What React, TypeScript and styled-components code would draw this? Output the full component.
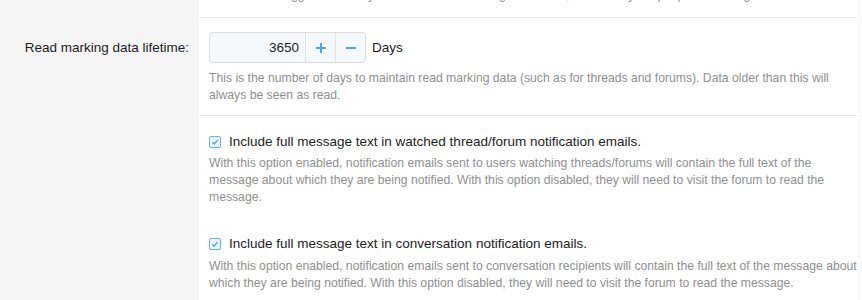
import React from 'react';
import styled, {createGlobalStyle} from "styled-components";

const GlobalStyle = createGlobalStyle`
  html, body {
    margin: 0;
    padding: 0;
    background: #fafafa;
    font-family: "Liberation Sans", Arial, sans-serif;
    overflow: hidden;
  }
`;

const Page = styled.div`
  height: 300px;
  overflow: hidden;
`;

const Form = styled.div`
  width: 857px;
  height: 313px;
  margin-top: -13px;
  background: #ffffff;
  display: flex;
  flex-direction: column;
`;

const Row = styled.div<{ $grow?: boolean }>`
  display: grid;
  grid-template-columns: 199px 1fr;
  flex: ${p => (p.$grow ? '1' : 'none')};
`;

const Label = styled.div<{ $pad?: string }>`
  background: #f5f5f5;
  text-align: right;
  padding: ${p => p.$pad || '0'};
  padding-right: 10px;
  font-size: 13.5px;
  line-height: 31px;
  color: #1d1d1d;
`;

const Controls = styled.div<{ $divider?: boolean; $pad: string }>`
  padding: ${p => p.$pad};
  padding-left: 10px;
  border-bottom: ${p => (p.$divider ? '1px solid #e6e6e6' : 'none')};
`;

const Hint = styled.div<{ $gap?: number }>`
  margin-top: ${p => p.$gap || 0}px;
  font-size: 12.2px;
  line-height: 17px;
  color: #8f8f8f;
`;

const InputLine = styled.div`
  display: flex;
  align-items: center;
`;

const Spinbox = styled.div`
  display: flex;
  width: 157px;
  height: 31px;
  box-sizing: border-box;
  border: 1px solid #dcdcdc;
  border-radius: 4px;
  overflow: hidden;
  background: #f6f9fc;
`;

const NumberField = styled.div`
  flex: 1;
  text-align: right;
  padding-right: 6px;
  font-size: 13.5px;
  line-height: 29px;
  color: #1d1d1d;
`;

const SpinButton = styled.div`
  width: 29px;
  display: flex;
  align-items: center;
  justify-content: center;
  border-left: 1px solid #e2e2e2;
  color: #47a7eb;
`;

const Unit = styled.span`
  margin-left: 6px;
  font-size: 13.5px;
  color: #1d1d1d;
`;

const CheckLine = styled.label<{ $gap?: number }>`
  display: flex;
  align-items: center;
  gap: 8px;
  margin-top: ${p => p.$gap || 0}px;
  font-size: 13.5px;
  line-height: 19px;
  color: #1d1d1d;
`;

const Box = styled.span`
  width: 12px;
  height: 12px;
  box-sizing: border-box;
  border: 1px solid #5fb2ee;
  border-radius: 2px;
  background: #eef6fd;
  display: flex;
  align-items: center;
  justify-content: center;
`;

const Check = () => (
    <Box>
        <svg width="8" height="8" viewBox="0 0 8 8">
            <path d="M1.2 4.2 L3.2 6 L6.8 1.8" fill="none" stroke="#47a7eb" strokeWidth="1.3"/>
        </svg>
    </Box>
);

const Plus = () => (
    <svg width="12" height="12" viewBox="0 0 12 12">
        <path d="M6 1 V11 M1 6 H11" stroke="currentColor" strokeWidth="2"/>
    </svg>
);

const Minus = () => (
    <svg width="12" height="12" viewBox="0 0 12 12">
        <path d="M1 6 H11" stroke="currentColor" strokeWidth="2"/>
    </svg>
);

const App = () => {
    return (
        <Page>
            <GlobalStyle/>
            <Form>
                <Row>
                    <Label/>
                    <Controls $divider $pad={'0 0 13px'}>
                        <Hint>
                            Users will be logged out if they have been inactive longer than this, unless they keep a persistent login.
                        </Hint>
                    </Controls>
                </Row>
                <Row>
                    <Label $pad={'14px 0 0'}>Read marking data lifetime:</Label>
                    <Controls $divider $pad={'14px 0 11px'}>
                        <InputLine>
                            <Spinbox>
                                <NumberField>3650</NumberField>
                                <SpinButton><Plus/></SpinButton>
                                <SpinButton><Minus/></SpinButton>
                            </Spinbox>
                            <Unit>Days</Unit>
                        </InputLine>
                        <Hint $gap={7}>
                            This is the number of days to maintain read marking data (such as for threads and forums). Data older than this will always be seen as read.
                        </Hint>
                    </Controls>
                </Row>
                <Row $grow>
                    <Label/>
                    <Controls $pad={'16px 0 0'}>
                        <CheckLine>
                            <Check/>
                            Include full message text in watched thread/forum notification emails.
                        </CheckLine>
                        <Hint $gap={4}>
                            With this option enabled, notification emails sent to users watching threads/forums will contain the full text of the message about which they are being notified. With this option disabled, they will need to visit the forum to read the message.
                        </Hint>
                        <CheckLine $gap={28}>
                            <Check/>
                            Include full message text in conversation notification emails.
                        </CheckLine>
                        <Hint $gap={5}>
                            With this option enabled, notification emails sent to conversation recipients will contain the full text of the message about which they are being notified. With this option disabled, they will need to visit the forum to read the message.
                        </Hint>
                    </Controls>
                </Row>
            </Form>
        </Page>
    );
};

export default App;
